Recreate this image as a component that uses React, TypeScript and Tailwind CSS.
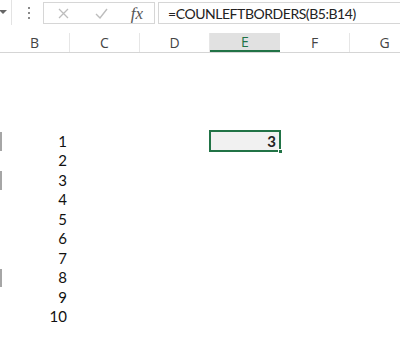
import React from "react";

const cols = ["B", "C", "D", "E", "F", "G"];
const rows = [null, null, null, null, 1, 2, 3, 4, 5, 6, 7, 8, 9, 10, null];
// rows that carry a left border on column B (B5, B7, B12)
const leftBorder = [4, 6, 11];

const App = () => {
  return (
    <div className="w-[400px] h-[349px] overflow-hidden bg-white font-['Lato','Liberation_Sans',sans-serif]">
      {/* formula bar */}
      <div className="flex items-center h-[25px]">
        <div className="w-[12px] h-full flex items-center justify-start border-r border-[#e3e3e3]">
          <svg width="8" height="5" viewBox="0 0 8 5" className="ml-[-1px]">
            <path d="M0 0 L8 0 L4 4 Z" fill="#666" />
          </svg>
        </div>
        <div className="w-[31px] h-full flex flex-col items-center justify-center gap-[3px] pl-[2px]">
          <span className="w-[2px] h-[2px] bg-[#8a8a8a]" />
          <span className="w-[2px] h-[2px] bg-[#8a8a8a]" />
          <span className="w-[2px] h-[2px] bg-[#8a8a8a]" />
        </div>
        <div className="w-[112px] h-[22px] mt-[1px] flex items-center border border-[#d6d6d6]">
          <div className="w-[38px] flex justify-center">
            <svg width="11" height="11" viewBox="0 0 11 11">
              <path d="M1 1 L10 10 M10 1 L1 10" stroke="#bdbdbd" strokeWidth="1.3" />
            </svg>
          </div>
          <div className="w-[38px] flex justify-center">
            <svg width="13" height="11" viewBox="0 0 13 11">
              <path d="M1 6 L5 10 L12 1" stroke="#bdbdbd" strokeWidth="1.4" fill="none" />
            </svg>
          </div>
          <div className="w-[34px] flex justify-center text-[17px] italic text-[#555] font-['Liberation_Serif',serif] leading-none">
            fx
          </div>
        </div>
        <div className="flex-1 h-[22px] mt-[1px] ml-[3px] flex items-center border border-[#d6d6d6] border-r-0 pl-[9px] text-[14px] text-[#222] tracking-[-0.45px]">
          =COUNLEFTBORDERS(B5:B14)
        </div>
      </div>

      {/* column headers */}
      <div className="mt-[8px] flex h-[20px] border-b border-[#d5d5d5] w-[420px]">
        {cols.map((c) => (
          <div
            key={c}
            className={
              c === "E"
                ? "w-[70px] h-full flex items-center justify-center bg-[#e1e1e1] border-b-2 border-[#217346] text-[#217346] text-[14px] font-['Open_Sans',sans-serif]"
                : "w-[70px] h-full flex items-center justify-center border-r border-[#e6e6e6] text-[#444] text-[14px] font-['Open_Sans',sans-serif]"
            }
          >
            {c}
          </div>
        ))}
      </div>

      {/* cells */}
      <div className="flex flex-col w-[420px]">
        {rows.map((v, i) => (
          <div key={i} className="flex h-[19.5px]">
            <div className="w-[70px] h-full relative flex items-center justify-end pr-[3px] text-[15px] text-[#111]">
              {leftBorder.includes(i) && (
                <span className="absolute left-0 top-[1px] bottom-0 w-[2px] bg-[#a6a6a6]" />
              )}
              {v}
            </div>
            <div className="w-[70px] h-full" />
            <div className="w-[70px] h-full" />
            <div className="w-[70px] h-full relative flex items-center justify-end pr-[4px] text-[15px] font-bold text-[#222]">
              {i === 4 && (
                <>
                  <span className="absolute -left-[1px] -right-[1px] -top-[1px] -bottom-[1px] border-2 border-[#217346] bg-[#f1f1f1]" />
                  <span className="absolute -right-[3px] -bottom-[3px] w-[5px] h-[5px] bg-[#217346] border border-white" />
                  <span className="relative">3</span>
                </>
              )}
            </div>
            <div className="w-[70px] h-full" />
            <div className="w-[70px] h-full" />
          </div>
        ))}
      </div>
    </div>
  );
};

export default App;
